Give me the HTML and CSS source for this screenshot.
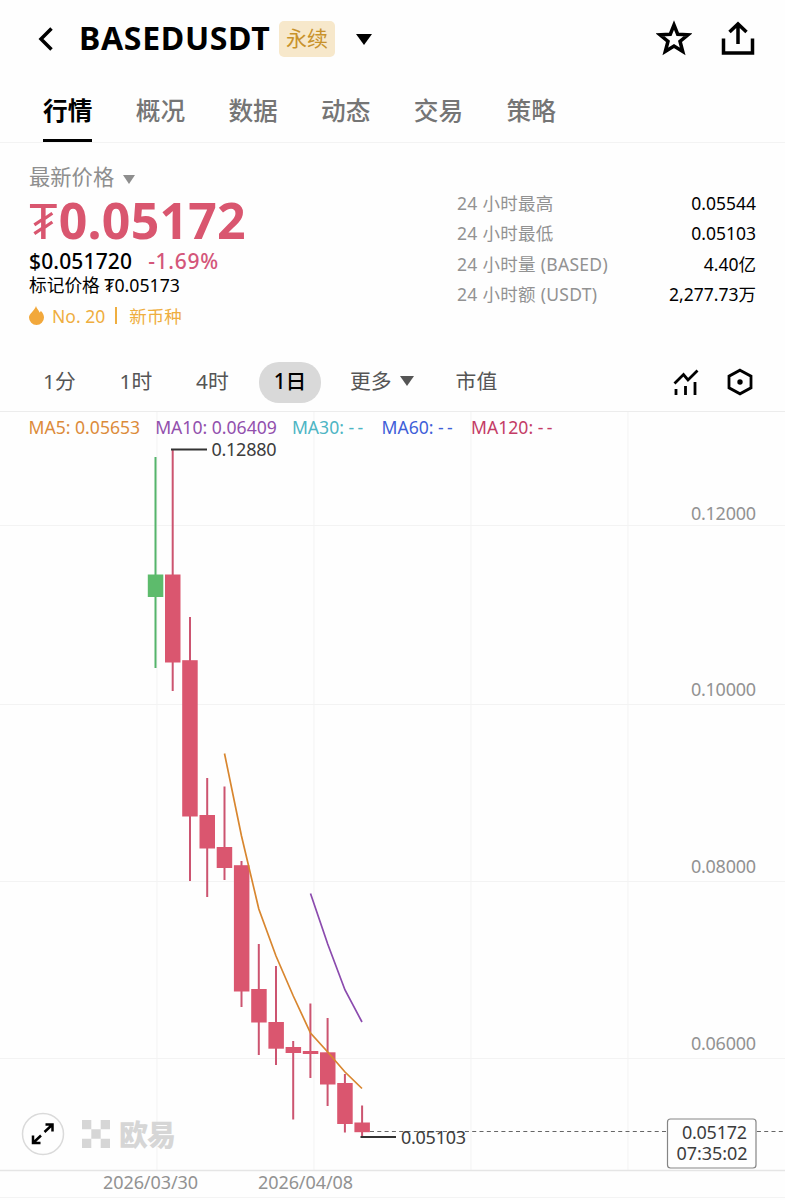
FILE: index.html
```
<!DOCTYPE html>
<html lang="zh-CN">
<head>
  <meta charset="UTF-8">
  <meta name="viewport" content="width=device-width, initial-scale=1.0">
  <title>BASEDUSDT 永续</title>
  <link rel="stylesheet" href="styles.css">
</head>
<body>
  <div class="header">
    <svg class="back" width="16" height="24" viewBox="0 0 16 24"><path d="M13.500 1.500L3 12l10.500 10.500"/></svg>
    <h1>BASEDUSDT</h1>
    <span class="tag">永续</span>
    <svg class="down" width="16" height="11" viewBox="0 0 16 11"><path d="M0 0h16L8 11z"/></svg>
    <div class="tools">
      <svg width="36" height="36" viewBox="0 0 36 36"><path d="M18 5l3.700 9.200 10.300.6-8 6.500 2.700 10.200L18 26l-8.700 5.500L12 21.300 4 14.800l10.300-.6z"/></svg>
      <svg width="36" height="36" viewBox="0 0 36 36"><path d="M3.500 18.500v14.500h29V18.500M18 24V4M9.500 12L18 4l8.500 8"/></svg>
    </div>
  </div>

  <ul class="tabs">
    <li class="active">行情</li>
    <li>概况</li>
    <li>数据</li>
    <li>动态</li>
    <li>交易</li>
    <li>策略</li>
  </ul>

  <div class="info">
    <div class="price">
      <p class="name">最新价格<svg width="12" height="9" viewBox="0 0 12 9"><path d="M0 0h12L6 9z"/></svg></p>
      <p class="last"><span>₮</span>0.05172</p>
      <p class="usd">$0.051720<span>-1.69%</span></p>
      <p class="mark">标记价格 <span>₮</span>0.05173</p>
      <p class="rank">
        <svg width="15" height="19" viewBox="0 0 15 19"><path d="M7 0c.5 2.500 2.800 4 3.500 6.500.8-.3 1.200-1 1.200-1.800C13.800 6.500 15 9 15 11.500a7.500 7.500 0 0 1-15 0C0 7.500 5.500 5 7 0z"/></svg>
        <span>No. 20</span><i></i><span>新币种</span>
      </p>
    </div>
    <ul class="stats">
      <li><span>24 小时最高</span><b>0.05544</b></li>
      <li><span>24 小时最低</span><b>0.05103</b></li>
      <li><span>24 小时量 (BASED)</span><b>4.40亿</b></li>
      <li><span>24 小时额 (USDT)</span><b>2,277.73万</b></li>
    </ul>
  </div>

  <div class="period">
    <span class="min">1分</span>
    <span class="hour">1时</span>
    <span class="hour4">4时</span>
    <span class="on">1日</span>
    <span class="more">更多<svg width="14" height="10" viewBox="0 0 14 10"><path d="M0 0h14L7 10z"/></svg></span>
    <span>市值</span>
    <div class="icons">
      <svg width="28" height="28" viewBox="0 0 28 28"><path d="M2.500 15.500l9-9 4.500 5.500L25.500 2.500M4 21v6M13.500 18v9M23 14v13"/></svg>
      <svg width="28" height="28" viewBox="0 0 28 28"><path d="M14 2.200l11 6v11.600l-11 6-11-6V8.200z"/><circle cx="14" cy="14" r="2.700"/></svg>
    </div>
  </div>

  <div class="chart">
    <div class="legend">
      <span class="ma5">MA5: 0.05653</span>
      <span class="ma10">MA10: 0.06409</span>
      <span class="ma30">MA30: <em>--</em></span>
      <span class="ma60">MA60: <em>--</em></span>
      <span class="ma120">MA120: <em>--</em></span>
    </div>
    <!-- 坐标和页面一致，从 y=412 开始 -->
    <svg class="kline" width="785" height="788" viewBox="0 412 785 788">
      <path class="grid" d="M157 412V1170M314 412V1170M471 412V1170M628 412V1170M0 525.500H785M0 704.500H785M0 881.500H785M0 1058.500H785"/>
      <path class="axis" d="M0 1170.500H785"/>
      <path class="grid" d="M0 1197.500H785"/>

      <!-- 水印 -->
      <g class="logo">
        <path d="M82 1120h9.300v9.300H82zM100.700 1120h9.300v9.300h-9.300zM91.300 1129.300h9.400v9.400h-9.400zM82 1138.700h9.300v9.300H82zM100.700 1138.700h9.300v9.300h-9.300z"/>
        <text x="119" y="1145.500" textLength="57">欧易</text>
      </g>

      <g class="up">
        <path d="M155.500 457V668"/>
        <rect x="147.800" y="574.500" width="15.500" height="22.500"/>
      </g>
      <g class="fall">
        <path d="M172.700 449V691M190 617V881M207.200 778V897M224.500 786.500V880M241.500 861V1007M258.800 944V1055M276 966V1065M293.200 1041V1119.500M310.400 1003.500V1078M327.600 1018V1106M344.900 1074V1132.500M362.100 1105.500V1136"/>
        <rect x="165" y="574.500" width="15.500" height="88"/>
        <rect x="182.200" y="660.200" width="15.500" height="156.300"/>
        <rect x="199.500" y="815" width="15.500" height="33.500"/>
        <rect x="216.700" y="847" width="15.500" height="21"/>
        <rect x="233.900" y="865.200" width="15.500" height="126.300"/>
        <rect x="251.200" y="989" width="15.500" height="33.500"/>
        <rect x="268.400" y="1022" width="15.500" height="26.700"/>
        <rect x="285.600" y="1047" width="15.500" height="6"/>
        <rect x="302.800" y="1051" width="15.500" height="3"/>
        <rect x="320" y="1052.300" width="15.500" height="32.200"/>
        <rect x="337.200" y="1083" width="15.500" height="41"/>
        <rect x="354.400" y="1122.500" width="15.500" height="9.700"/>
      </g>

      <polyline class="line5" points="224.500,753.500 241.500,836 258.800,909 276,956 293.300,996 310.500,1033 327.700,1052 345,1072 362,1088.500"/>
      <polyline class="line10" points="310.500,893.500 327.700,944 345,990 362,1022"/>

      <path class="now" d="M370 1131.500H785"/>
      <path class="mark-line" d="M171 449.500H207M360.500 1137H396"/>
      <g class="mark-text">
        <text x="211.500" y="456" textLength="65">0.12880</text>
        <text x="401" y="1143.500" textLength="65">0.05103</text>
      </g>
      <g class="scale">
        <text x="691" y="519.500" textLength="65">0.12000</text>
        <text x="691" y="696" textLength="65">0.10000</text>
        <text x="691" y="873" textLength="65">0.08000</text>
        <text x="691" y="1049.500" textLength="65">0.06000</text>
        <text x="103" y="1189" textLength="95">2026/03/30</text>
        <text x="258" y="1189" textLength="95">2026/04/08</text>
      </g>
      <g class="mark-text">
        <rect x="667.500" y="1119" width="88.500" height="49" rx="3"/>
        <text x="682" y="1139" textLength="65">0.05172</text>
        <text x="676.500" y="1160" textLength="71">07:35:02</text>
      </g>

      <g class="full">
        <circle cx="43" cy="1134" r="20.500"/>
        <path d="M44.500 1132L52.500 1124.500M45.500 1124.500H52.500V1131.500M41 1135.500L33 1143M33 1135.500V1143H40.500"/>
      </g>
    </svg>
  </div>
</body>
</html>
```
FILE: styles.css
```
*{
  margin: 0;
  padding: 0;
  box-sizing: border-box;
}

body{
  width: 785px;
  height: 1200px;
  overflow: hidden;
  background-color: #fefefe;
  color: #000;
  font-family: "Noto Sans", "Noto Sans CJK SC", sans-serif;
}

ul{
  list-style: none;
}

svg{
  display: block;
  flex-shrink: 0;
}

.header{
  display: flex;
  align-items: center;
  height: 78px;
  padding: 0 29px 0 38px;
}

.back,
.tools svg,
.icons svg{
  fill: none;
  stroke: #000;
  stroke-width: 3.5;
}

.header h1{
  width: 192px;
  margin-left: 25px;
  font-size: 32px;
  line-height: 38px;
  padding-bottom: 2px;
  font-weight: 700;
  letter-spacing: .7px;
  white-space: nowrap;
}

.tag{
  width: 56px;
  height: 36px;
  margin-left: 8px;
  border-radius: 5px;
  background-color: #f7e8cb;
  color: #c8922b;
  font-size: 21px;
  line-height: 35px;
  text-align: center;
}

.down{
  margin-left: 21px;
}

.tools{
  display: flex;
  gap: 28px;
  margin-left: auto;
  padding-bottom: 2px;
}

.tabs{
  display: flex;
  gap: 43.3px;
  height: 65px;
  padding-left: 43px;
  border-bottom: 1px solid #f3f3f3;
}

.tabs li{
  height: 64px;
  font-size: 24.7px;
  line-height: 66px;
  color: #757575;
  font-weight: 500;
}

.tabs .active{
  border-bottom: 3px solid #000;
  color: #000;
  font-weight: 700;
}

.info{
  display: flex;
  justify-content: space-between;
  height: 219px;
  padding: 21px 29px 0;
  white-space: nowrap;
}

.name{
  display: flex;
  align-items: center;
  gap: 9px;
  height: 30px;
  padding-bottom: 4px;
  font-size: 21.3px;
  line-height: 26px;
  color: #8e8e8e;
}

.name svg{
  margin-top: 4px;
}

.name svg,
.more svg{
  fill: currentColor;
}

.last{
  height: 54px;
  font-size: 50px;
  line-height: 53px;
  font-weight: 700;
  letter-spacing: .2px;
  color: #d9566f;
}

.last span{
  margin-right: 1px;
  font-weight: 400;
}

.usd{
  height: 27px;
  font-size: 21px;
  line-height: 27px;
  font-weight: 500;
  letter-spacing: .15px;
}

.usd span{
  margin-left: 16px;
  color: #d4567a;
  letter-spacing: .7px;
}

.mark{
  height: 22px;
  font-size: 17.7px;
  line-height: 21px;
}

.rank{
  display: flex;
  align-items: center;
  height: 38px;
  padding-bottom: 1px;
  font-size: 17.5px;
  line-height: 24px;
  color: #efae3f;
}

.rank svg{
  margin-right: 8px;
  fill: #f2a83b;
}

.rank i{
  width: 2px;
  height: 17px;
  margin: 0 12px 0 10px;
  background-color: #efae3f;
}

.stats{
  width: 299px;
  padding-top: 24px;
}

.stats li{
  display: flex;
  justify-content: space-between;
  height: 30.3px;
  font-size: 17.5px;
  line-height: 30px;
}

.stats span{
  color: #929292;
  letter-spacing: .3px;
}

.stats b{
  font-weight: 400;
}

.period{
  display: flex;
  align-items: center;
  height: 50px;
  padding: 0 31px 9px 43px;
  border-bottom: 1px solid #ececec;
  font-size: 20.8px;
  line-height: 38px;
  color: #555;
  white-space: nowrap;
}

.period > span{
  padding-bottom: 2px;
}

.min,
.hour{
  width: 76.5px;
}

.hour4{
  width: 63px;
}

.period .on{
  width: 62px;
  height: 41px;
  margin-right: 29px;
  border-radius: 20px;
  background-color: #d9d9d9;
  color: #000;
  line-height: 38px;
  font-weight: 500;
  text-align: center;
}

.more{
  display: flex;
  align-items: center;
  gap: 8px;
  margin-right: 42px;
}

.icons{
  display: flex;
  gap: 26px;
  margin-left: auto;
}

.icons svg{
  stroke-width: 2.8;
}

.icons circle{
  fill: #000;
  stroke: none;
}

.chart{
  position: relative;
  height: 788px;
}

/* 均线图例盖在K线图上 */
.legend{
  position: absolute;
  top: 3px;
  left: 28.500px;
  display: flex;
  gap: 15px;
  font-size: 17.6px;
  line-height: 24px;
  white-space: nowrap;
}

.legend em{
  font-style: normal;
  letter-spacing: 3.3px;
}

.ma5{ color: #dc8b3a; }
.ma10{ color: #9250ad; }
.ma30{ color: #4db5c4; }
.ma60{ color: #3f5fd8; }
.ma120{ color: #c43c66; }

.kline text{
  font-size: 18px;
}

.grid{
  fill: none;
  stroke: #f3f3f3;
}

.axis{
  stroke: #e5e5e5;
  stroke-width: 1.5;
}

.logo{
  fill: #d6d6d6;
}

.kline .logo text{
  font-size: 29px;
  font-weight: 900;
}

.up,
.fall{
  stroke-width: 2;
}

.up path{
  stroke: #55b46b;
}

.fall path{
  stroke: #cc5470;
}

.up rect{
  fill: #5dbb6c;
}

.fall rect{
  fill: #da566f;
}

.line5,
.line10{
  fill: none;
  stroke: #d8862f;
  stroke-width: 1.7;
}

.line10{
  stroke: #8b4bae;
}

.now{
  stroke: #666;
  stroke-width: 1.2;
  stroke-dasharray: 4 3.3;
}

.mark-line{
  stroke: #333;
  stroke-width: 2;
}

.mark-text{
  fill: #3c3c3c;
}

.mark-text rect{
  fill: #fefefe;
  stroke: #858585;
  stroke-width: 1.2;
}

.scale{
  fill: #929292;
}

.full circle{
  fill: #fefefe;
  stroke: #dadada;
  stroke-width: 1.5;
}

.full path{
  fill: none;
  stroke: #000;
  stroke-width: 2.5;
}
```
